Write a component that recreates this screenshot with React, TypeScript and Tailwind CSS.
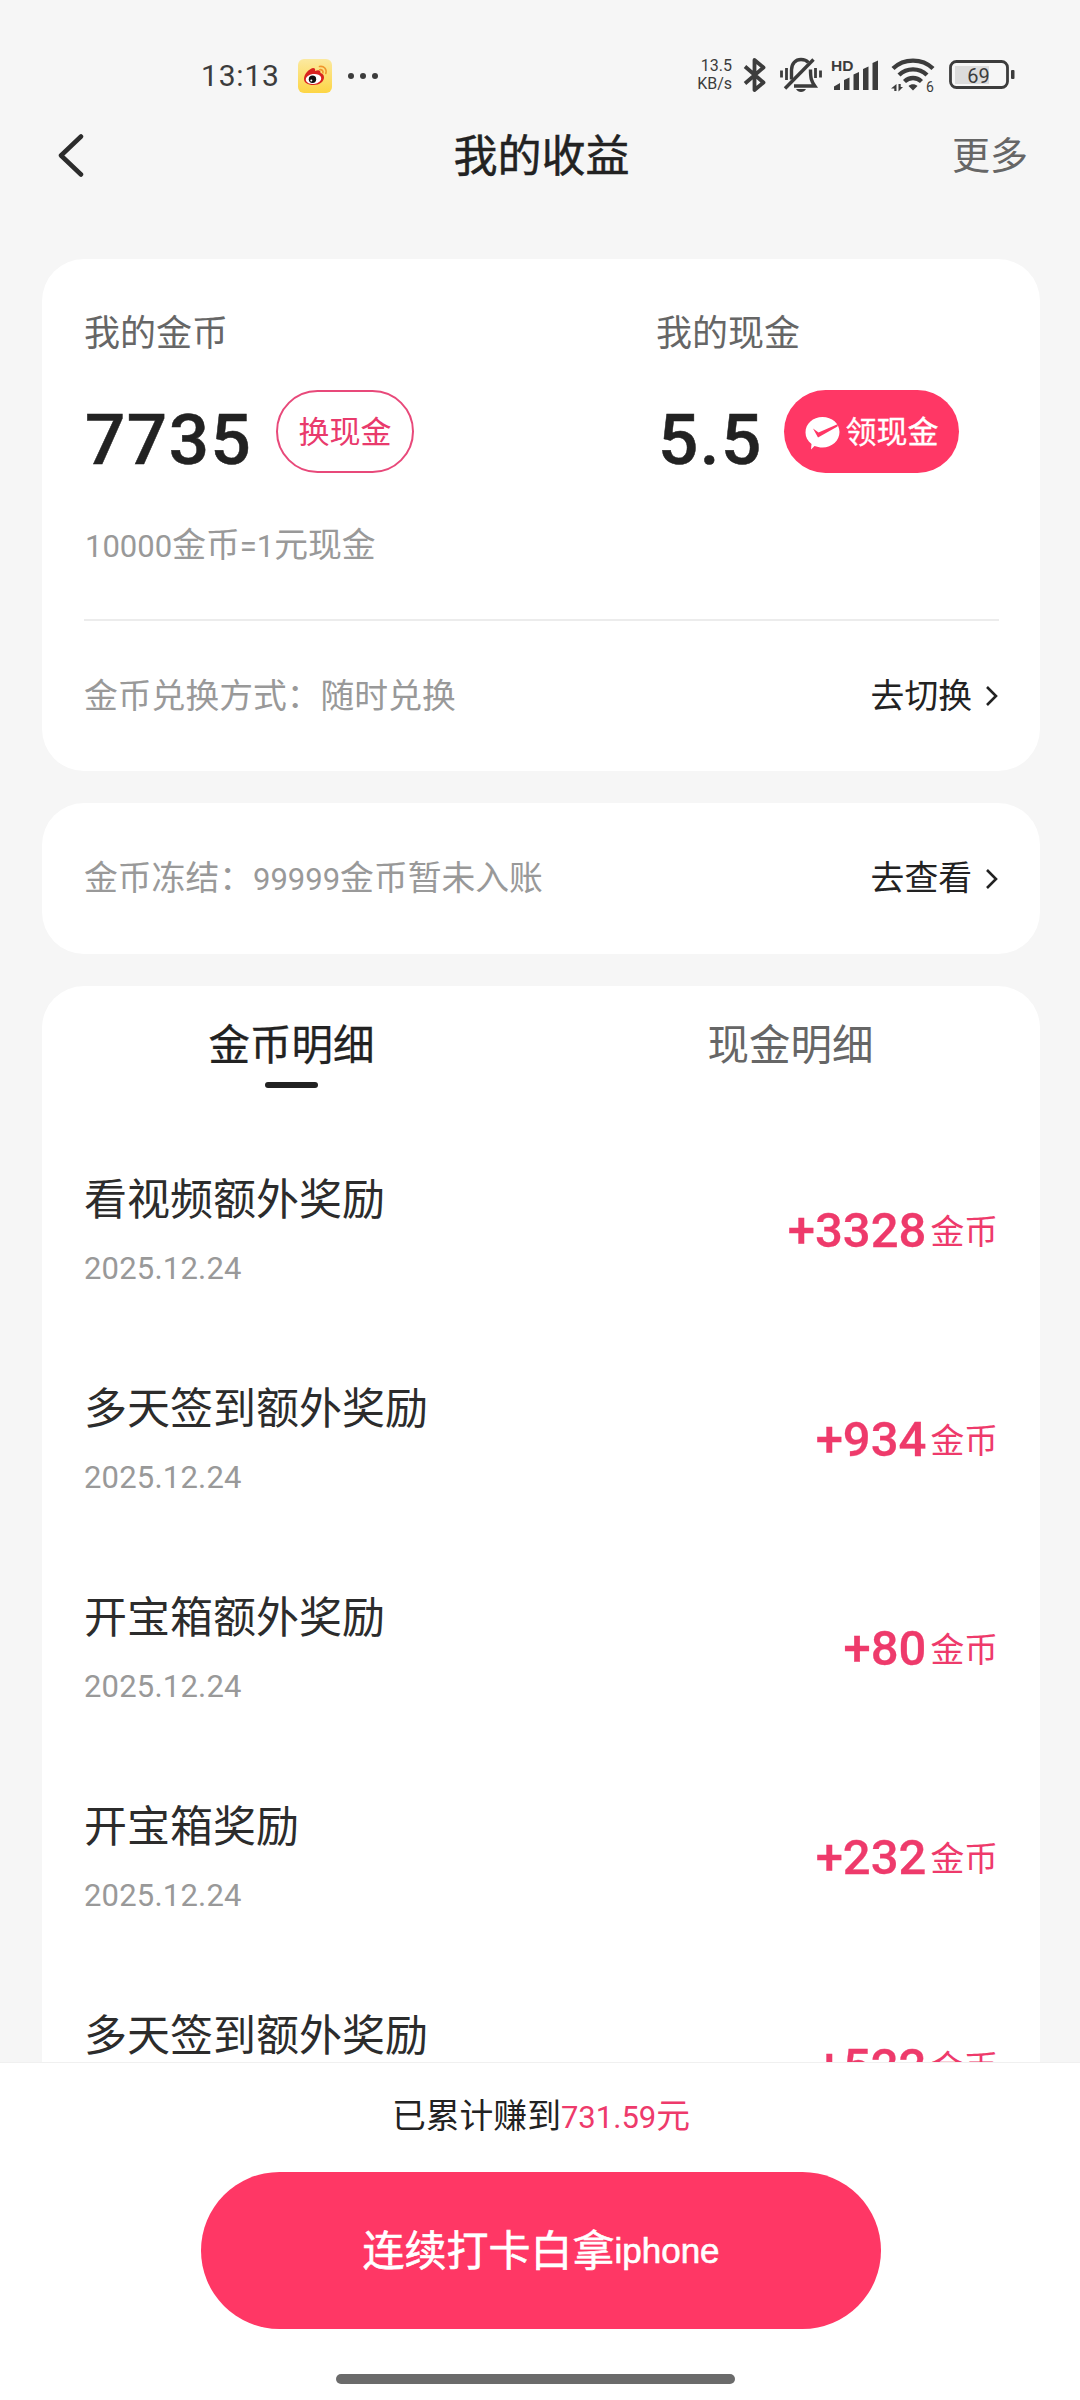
import React, { ReactElement, ReactNode } from 'react'

type Income = {
  title: string
  date: string
  amount: string
}

const incomes: Income[] = [
  { title: '看视频额外奖励', date: '2025.12.24', amount: '+3328' },
  { title: '多天签到额外奖励', date: '2025.12.24', amount: '+934' },
  { title: '开宝箱额外奖励', date: '2025.12.24', amount: '+80' },
  { title: '开宝箱奖励', date: '2025.12.24', amount: '+232' },
  { title: '多天签到额外奖励', date: '2025.12.24', amount: '+522' },
]

function IconWeibo(): ReactElement {
  return (
    <svg width="34" height="34" viewBox="0 0 34 34">
      <defs>
        <linearGradient id="weibo" x1="0" y1="0" x2="0" y2="1">
          <stop offset="0" stopColor="#fbe9a0" />
          <stop offset="1" stopColor="#fdd544" />
        </linearGradient>
      </defs>
      <rect width="34" height="34" rx="6" fill="url(#weibo)" />
      <path
        d="M6 20c0-5 5-10 9-11 2 0 2.500 1.200 2 3 3-1.300 6-1 5.500 2 2 .6 3.500 2 3.500 4.500 0 4-4.500 7.500-10.500 7.500S6 23.500 6 20Z"
        fill="#d9231f"
      />
      <ellipse cx="15.500" cy="20" rx="7.800" ry="5" fill="#fff" transform="rotate(-8 15.500 20)" />
      <circle cx="14.500" cy="20.300" r="3.700" fill="#111" />
      <circle cx="13.300" cy="21.500" r="1" fill="#fff" />
      <path
        d="M21.500 7.500c4.500-.8 7.500 2.500 6.300 7M21.800 10.700c2.200-.3 3.600 1 3.100 3"
        fill="none"
        stroke="#f0952e"
        strokeWidth="1.600"
        strokeLinecap="round"
      />
    </svg>
  )
}

function IconBluetooth(): ReactElement {
  return (
    <svg width="24" height="36" viewBox="0 0 24 36" fill="none" stroke="#3c3c3c" strokeWidth="3.800" strokeLinejoin="round">
      <path d="M2 9.500 20.500 25.500 11.500 33V3L20.500 10.500 2 26.500" />
    </svg>
  )
}

function IconMuted(): ReactElement {
  return (
    <svg width="42" height="36" viewBox="0 0 42 36" fill="none" stroke="#3c3c3c" strokeWidth="3.400">
      <path d="M11.500 22.500V13c0-6.500 4-10.500 9.500-10.500 3.200 0 5.700 1 7.300 3M30.500 12.500c0 9 .8 11.500 4.300 16.500H14" />
      <path d="M33.500 2.500 5 31.500" />
      <path d="M1.500 13.500v7M6.500 11v12M35.500 11v10M40.500 13.500v7" strokeWidth="2.800" />
      <path d="M16 32h10c-1 2-3 3-5 3s-4-1-5-3Z" fill="#3c3c3c" stroke="none" />
    </svg>
  )
}

function IconSignal(): ReactElement {
  return (
    <svg className="overflow-visible" width="48" height="32" viewBox="0 0 48 32" fill="#3c3c3c">
      <text x="-1" y="11.500" fontSize="15.500" fontWeight="700" fontFamily="Liberation Sans, sans-serif">
        HD
      </text>
      <path d="M2 27.500 8 24v7H2ZM12 21l5.500-2.500V31H12ZM21.500 15.500 27 13v18h-5.500ZM31 10l5.500-2.500V31H31ZM40.500 4 46 1.500V31h-5.500Z" />
    </svg>
  )
}

function IconWifi(): ReactElement {
  return (
    <svg className="overflow-visible" width="44" height="36" viewBox="0 0 44 36">
      <g fill="none" stroke="#3c3c3c" strokeWidth="4.400">
        <path d="M2 11.500c11-10.500 29-10.500 40 0" />
        <path d="M8 18c8-7.500 20-7.500 28 0" />
        <path d="M13.500 24.500c5-4.700 12-4.700 17 0" />
      </g>
      <path d="M17.500 29c2.500-2.500 6.500-2.500 9 0L22 33.500Z" fill="#3c3c3c" />
      <path d="M0 31.500 5.500 27v7H3.300v-2.500ZM7.500 27h2.200v3H12L7.500 34.500Z" fill="#3c3c3c" />
      <text x="35" y="34.500" fontSize="14" fill="#3c3c3c" fontFamily="Roboto, sans-serif">
        6
      </text>
    </svg>
  )
}

function IconBattery(): ReactElement {
  return (
    <svg width="66" height="30" viewBox="0 0 66 30">
      <rect x="6" y="6" width="34" height="18" fill="#dcdcdc" />
      <rect x="1.500" y="1.500" width="57" height="26" rx="6" fill="none" stroke="#3c3c3c" strokeWidth="2.800" />
      <rect x="62" y="10" width="3.500" height="9" rx="1" fill="#3c3c3c" />
      <text x="29.500" y="22.500" textAnchor="middle" fontSize="20" fill="#3c3c3c" fontFamily="Roboto, sans-serif">
        69
      </text>
    </svg>
  )
}

function IconBubbleCheck(): ReactElement {
  return (
    <svg width="35" height="33" viewBox="0 0 35 33">
      <path
        d="M17.500 0C27 0 34.500 6.500 34.500 15S27 30.500 17.500 30.500c-3 0-5.500-.6-8-1.500L6 32.500l.5-5.500C2.500 24 .5 20 .5 15.500.5 6.500 8 0 17.500 0Z"
        fill="#fff"
      />
      <path d="M8 11.500 13.500 15.500 33 7 32.500 9.500 13 20.500Z" fill="#ff3765" />
    </svg>
  )
}

function StatusBar(): ReactElement {
  return (
    <div className="flex h-[110px] items-end pr-[65px] pb-[17px] pl-[201px] font-['Roboto',sans-serif] text-[#3c3c3c]">
      <span className="w-[97px] text-[30px] leading-[34px] tracking-[0.800px]">13:13</span>
      <IconWeibo />
      <div className="mb-[14px] ml-4 flex gap-[6px]">
        <span className="size-[6px] rounded-full bg-[#3c3c3c]" />
        <span className="size-[6px] rounded-full bg-[#3c3c3c]" />
        <span className="size-[6px] rounded-full bg-[#3c3c3c]" />
      </div>
      <div className="ml-auto flex items-center">
        <div className="mr-[11px] flex flex-col text-right text-[16px] leading-[18px]">
          <span>13.5</span>
          <span>KB/s</span>
        </div>
        <IconBluetooth />
        <span className="w-[13px]" />
        <IconMuted />
        <span className="w-[10px]" />
        <IconSignal />
        <span className="w-[11px]" />
        <IconWifi />
        <span className="w-[14px]" />
        <IconBattery />
      </div>
    </div>
  )
}

function Header(): ReactElement {
  return (
    <div className="flex h-[90px] items-center justify-between pr-[52px] pl-[55px]">
      <svg className="w-[78px] shrink-0" height="44" viewBox="0 0 78 44" fill="none">
        <path d="M26 3.500 6 22.500l20 19" stroke="#2c2c2c" strokeWidth="4.500" strokeLinecap="round" strokeLinejoin="round" />
      </svg>
      <h1 className="pt-[3px] text-[44px] text-[#222] [-webkit-text-stroke:0.500px_#222]">我的收益</h1>
      <span className="w-[78px] pt-[2px] text-right text-[38px] whitespace-nowrap text-[#666]">更多</span>
    </div>
  )
}

function RowLink({ children }: { children: ReactNode }): ReactElement {
  return (
    <div className="flex items-center text-[33.800px] text-[#222]">
      <span>{children}</span>
      <svg className="ml-[13px]" width="14" height="22" viewBox="0 0 14 22" fill="none">
        <path d="m2 2 9 9-9 9" stroke="#222" strokeWidth="2.600" />
      </svg>
    </div>
  )
}

function Amount({ children }: { children: ReactNode }): ReactElement {
  return (
    <span className="pt-[15px] font-['Roboto',sans-serif] text-[71px] leading-none font-medium tracking-[1.500px] text-[#222] [-webkit-text-stroke:0.500px_#222]">
      {children}
    </span>
  )
}

function Num({ children }: { children: ReactNode }): ReactElement {
  return <span className="font-['Roboto',sans-serif] text-[31px]">{children}</span>
}

function BalanceCard(): ReactElement {
  return (
    <div className="h-[512px] rounded-[42px] bg-white pr-[41px] pl-[42px]">
      <div className="flex h-[362px] border-b-2 border-[#ececec] pt-[48px]">
        <div className="w-[572px]">
          <div className="h-[54px] text-[36px] leading-[54px] text-[#666]">我的金币</div>
          <div className="mt-[29px] flex h-[83px] items-center">
            <div className="flex w-[192px] pl-[1px]">
              <Amount>7735</Amount>
            </div>
            <button className="h-[83px] w-[138px] rounded-full border-2 border-[#e8497a] pt-[3px] text-[31px] text-[#e93a6c]">
              换现金
            </button>
          </div>
          <div className="mt-[47px] pl-[1px] text-[33.800px] leading-[50px] text-[#999]">
            <Num>10000</Num>金币<Num>=1</Num>元现金
          </div>
        </div>
        <div>
          <div className="h-[54px] text-[36px] leading-[54px] text-[#666]">我的现金</div>
          <div className="mt-[29px] flex h-[83px] items-center">
            <div className="flex w-[128px] pl-[2px]">
              <Amount>5.5</Amount>
            </div>
            <button className="flex h-[83px] w-[175px] items-center justify-center gap-[6px] rounded-full bg-[#ff3765] pt-[4px] text-[31px] text-white [-webkit-text-stroke:0.300px_#fff]">
              <IconBubbleCheck />
              领现金
            </button>
          </div>
        </div>
      </div>
      <div className="flex h-[150px] items-center justify-between">
        <span className="text-[33.800px] text-[#999]">金币兑换方式：随时兑换</span>
        <RowLink>去切换</RowLink>
      </div>
    </div>
  )
}

function FrozenCard(): ReactElement {
  return (
    <div className="flex h-[151px] items-center justify-between rounded-[42px] bg-white pr-[41px] pl-[42px]">
      <span className="text-[33.800px] text-[#999]">
        金币冻结：<Num>99999</Num>金币暂未入账
      </span>
      <RowLink>去查看</RowLink>
    </div>
  )
}

function IncomeRow({ title, date, amount }: Income): ReactElement {
  return (
    <div className="flex h-[209px] shrink-0 items-center justify-between">
      <div className="flex flex-col pt-[2px]">
        <span className="text-[43px] leading-[60px] text-[#2c2c2c]">{title}</span>
        <span className="mt-[19px] font-['Roboto',sans-serif] text-[31px] leading-[40px] tracking-[0.200px] text-[#999]">
          {date}
        </span>
      </div>
      <div className="flex items-center text-[#ee3a6b]">
        <span className="pt-[4px] font-['Roboto',sans-serif] text-[49px] leading-none font-medium [-webkit-text-stroke:0.300px_#ee3a6b]">
          {amount}
        </span>
        <span className="ml-[4px] pt-[9px] text-[33.800px] leading-none">金币</span>
      </div>
    </div>
  )
}

function DetailCard(): ReactElement {
  return (
    <div className="flex flex-1 flex-col overflow-hidden rounded-t-[42px] bg-white">
      <div className="flex h-[138px] shrink-0">
        <div className="flex flex-1 flex-col items-center pt-[29px]">
          <span className="text-[41.500px] leading-[62px] text-[#222] [-webkit-text-stroke:0.300px_#222]">金币明细</span>
          <span className="mt-[5px] h-[6px] w-[53px] rounded-full bg-[#222]" />
        </div>
        <div className="flex flex-1 flex-col items-center pt-[29px]">
          <span className="text-[41.500px] leading-[62px] text-[#666]">现金明细</span>
        </div>
      </div>
      <div className="flex flex-col pr-[42px] pl-[42px]">
        {incomes.map((income, index) => (
          <IncomeRow key={index} {...income} />
        ))}
      </div>
    </div>
  )
}

function BottomBar(): ReactElement {
  return (
    <div className="flex h-[338px] flex-col items-center border-t border-[#f0f0f0] bg-white">
      <div className="mt-[28px] ml-[2px] text-[33.800px] leading-[50px] text-[#222]">
        已累计赚到
        <span className="text-[#ee3a6b]">
          <Num>731.59</Num>元
        </span>
      </div>
      <button className="mt-[29px] ml-[2px] flex h-[157px] w-[680px] items-center justify-center rounded-full bg-[#ff3765] pt-[2px] text-[42px] text-white [-webkit-text-stroke:0.600px_#fff]">
        连续打卡白拿<span className="text-[35px]">iphone</span>
      </button>
      <div className="mt-[45px] mr-[9px] h-[10px] w-[399px] rounded-full bg-[#6b6b6b]" />
    </div>
  )
}

export default function App(): ReactElement {
  return (
    <div className="flex h-[2400px] w-[1080px] flex-col overflow-hidden bg-[#f6f6f6] font-['Liberation_Sans','Noto_Sans_CJK_SC',sans-serif]">
      <StatusBar />
      <Header />
      <div className="mt-[59px] flex min-h-0 flex-1 flex-col gap-8 pr-10 pl-[42px]">
        <BalanceCard />
        <FrozenCard />
        <DetailCard />
      </div>
      <BottomBar />
    </div>
  )
}
